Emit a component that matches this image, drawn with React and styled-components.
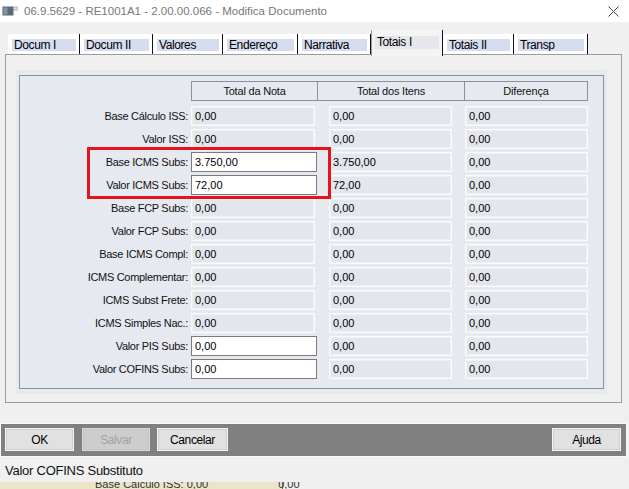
import React from "react";
import styled, { createGlobalStyle } from "styled-components";

const GlobalStyle = createGlobalStyle`
  html, body {
    margin: 0;
    padding: 0;
    background: #f0f0f0;
    overflow: hidden;
  }
  body {
    font-family: "Liberation Sans", Arial, sans-serif;
  }
`;

const Window = styled.div`
  width: 629px;
  height: 489px;
  display: flex;
  flex-direction: column;
  background: #f0f0f0;
  overflow: hidden;
`;

const TitleBar = styled.div`
  height: 22px;
  flex: none;
  display: flex;
  align-items: center;
  background: #ffffff;
  padding-left: 2px;
`;

const Title = styled.span`
  margin-left: 6px;
  font-size: 11.5px;
  color: #777;
  white-space: nowrap;
`;

const CloseBox = styled.div`
  margin-left: auto;
  width: 32px;
  height: 22px;
  display: flex;
  align-items: center;
  justify-content: center;
`;

const TabStrip = styled.div`
  height: 32px;
  flex: none;
  display: flex;
  align-items: flex-end;
  padding-left: 8px;
`;

const Tab = styled.div`
  box-sizing: border-box;
  width: ${(p) => p.$w}px;
  height: ${(p) => (p.$active ? 26 : 20)}px;
  margin-bottom: ${(p) => (p.$active ? -2 : 0)}px;
  position: relative;
  z-index: ${(p) => (p.$active ? 2 : 1)};
  background: ${(p) => (p.$active ? "#f4f4f4" : "#ffffff")};
  border-left: 1px solid ${(p) => (p.$active ? "#9a9a9a" : "#ffffff")};
  border-right: 1px solid #111;
  padding: ${(p) => (p.$active ? "6px 3px 0 3px" : "5px 3px 2px 3px")};
  display: flex;
  align-items: flex-start;
`;

const TabLabel = styled.div`
  flex: 1;
  height: ${(p) => (p.$active ? 13 : 12)}px;
  line-height: ${(p) => (p.$active ? 12 : 13)}px;
  background: ${(p) => (p.$active ? "#e6e7ec" : "#d5ddef")};
  font-size: 12px;
  letter-spacing: -0.4px;
  color: #000;
  padding-left: 2px;
  white-space: nowrap;
  overflow: hidden;
`;

const Panel = styled.div`
  box-sizing: border-box;
  margin-left: 5px;
  width: 617px;
  height: 349px;
  flex: none;
  border: 1px solid #9c9c9c;
  background: #f0f0f0;
  padding: 15px 0 0 10px;
`;

const Group = styled.div`
  box-sizing: border-box;
  width: 591px;
  height: 324px;
  background: #e6e9ef;
  padding: 5px 3px 5px 3px;
`;

const Frame = styled.div`
  box-sizing: border-box;
  position: relative;
  height: 100%;
  border: 1px solid #8c929b;
  padding-top: 5px;
`;

const HeaderRow = styled.div`
  box-sizing: border-box;
  margin-left: 171px;
  width: 397px;
  height: 20px;
  display: flex;
  border: 1px solid #8c929b;
  margin-bottom: 5px;
`;

const HeaderCell = styled.div`
  width: ${(p) => p.$w}px;
  flex: ${(p) => (p.$w ? "none" : 1)};
  border-left: ${(p) => (p.$first ? "none" : "1px solid #8c929b")};
  text-align: center;
  font-size: 11px;
  letter-spacing: -0.2px;
  line-height: 18px;
  color: #111;
`;

const Rows = styled.div`
  display: grid;
  grid-template-columns: 171px 138px 136px 123px;
  grid-auto-rows: 20px;
  row-gap: 3px;
`;

const Label = styled.div`
  text-align: right;
  padding-right: 3px;
  font-size: 11px;
  letter-spacing: -0.3px;
  line-height: 20px;
  color: #111;
  white-space: nowrap;
`;

const Field = styled.div`
  box-sizing: border-box;
  width: ${(p) => p.$w}px;
  height: 20px;
  padding-left: 3px;
  font-size: 11px;
  line-height: 18px;
  color: #000;
  background: ${(p) => (p.$editable ? "#ffffff" : "#e3e6ed")};
  border: 1px solid ${(p) => (p.$editable ? "#7a7a7a" : "#fbfbfc")};
  box-shadow: ${(p) => (p.$editable ? "none" : "inset 0 0 0 1px #eef0f4")};
`;

const Highlight = styled.div`
  box-sizing: border-box;
  position: absolute;
  left: 67px;
  top: 71px;
  width: 244px;
  height: 52px;
  border: 3px solid #e3141b;
  pointer-events: none;
`;

const ButtonBar = styled.div`
  box-sizing: border-box;
  margin-top: 20px;
  width: 627px;
  height: 34px;
  flex: none;
  display: flex;
  align-items: flex-start;
  gap: 8px;
  padding: 4px 5px 0 4px;
  background: #808080;
  border: 1px solid #fafafa;
`;

const Button = styled.button`
  box-sizing: border-box;
  width: ${(p) => p.$w}px;
  height: 23px;
  margin-left: ${(p) => p.$ml || 0}px;
  padding: 0;
  font-family: "Liberation Sans", Arial, sans-serif;
  font-size: 12px;
  letter-spacing: -0.4px;
  color: ${(p) => (p.disabled ? "#a2a2a2" : "#000")};
  background: ${(p) => (p.disabled ? "#cdcdcd" : "#e1e1e1")};
  border: 1px solid ${(p) => (p.disabled ? "#dadada" : "#f4f4f4")};
  box-shadow: inset 0 0 0 1px ${(p) => (p.disabled ? "#c4c4c4" : "#cfcfcf")};

  &.push {
    margin-left: auto;
  }
`;

const StatusBar = styled.div`
  height: 25px;
  flex: none;
  display: flex;
  align-items: center;
  padding: 2px 0 0 5px;
  box-sizing: border-box;
  font-size: 13px;
  letter-spacing: -0.25px;
  color: #111;
  background: #f0f0f0;
`;

const BehindStrip = styled.div`
  flex: 1;
  display: flex;
  overflow: hidden;
  background: #f0f0f0;
`;

const BehindForm = styled.div`
  width: 283px;
  background: #ece4c8;
  border-right: 1px solid #6b6b6b;
  display: flex;
  align-items: flex-start;
  padding-left: 95px;
  box-sizing: border-box;
  font-size: 11px;
  color: #333;
  line-height: 12px;
  gap: 70px;
`;

const BehindText = styled.span`
  margin-top: -4px;
  white-space: nowrap;
`;

function AppIcon() {
  return (
    <svg width="16" height="12" viewBox="0 0 16 12">
      <rect x="0.5" y="1.5" width="11" height="9" fill="#5d6876" />
      <rect x="1.5" y="2.5" width="4" height="7" fill="#8592a1" />
      <rect x="11.5" y="1.5" width="4" height="4" fill="#a5b0bc" />
      <rect x="12.5" y="2.5" width="2" height="2" fill="#e9edf1" />
    </svg>
  );
}

function CloseIcon() {
  return (
    <svg width="11" height="11" viewBox="0 0 11 11">
      <path d="M0.5 0.5 L10.5 10.5 M10.5 0.5 L0.5 10.5" stroke="#444" strokeWidth="1" />
    </svg>
  );
}

const tabs = [
  { name: "Docum I", w: 72 },
  { name: "Docum II", w: 73 },
  { name: "Valores", w: 70 },
  { name: "Endereço", w: 75 },
  { name: "Narrativa", w: 73 },
  { name: "Totais I", w: 72, active: true },
  { name: "Totais II", w: 71 },
  { name: "Transp", w: 74 },
];

const rows = [
  { label: "Base Cálculo ISS:", a: "0,00", b: "0,00", c: "0,00" },
  { label: "Valor ISS:", a: "0,00", b: "0,00", c: "0,00" },
  { label: "Base ICMS Subs:", a: "3.750,00", b: "3.750,00", c: "0,00", edit: true },
  { label: "Valor ICMS Subs:", a: "72,00", b: "72,00", c: "0,00", edit: true },
  { label: "Base FCP Subs:", a: "0,00", b: "0,00", c: "0,00" },
  { label: "Valor FCP Subs:", a: "0,00", b: "0,00", c: "0,00" },
  { label: "Base ICMS Compl:", a: "0,00", b: "0,00", c: "0,00" },
  { label: "ICMS Complementar:", a: "0,00", b: "0,00", c: "0,00" },
  { label: "ICMS Subst Frete:", a: "0,00", b: "0,00", c: "0,00" },
  { label: "ICMS Simples Nac.:", a: "0,00", b: "0,00", c: "0,00" },
  { label: "Valor PIS Subs:", a: "0,00", b: "0,00", c: "0,00", edit: true },
  { label: "Valor COFINS Subs:", a: "0,00", b: "0,00", c: "0,00", edit: true },
];

export default function App() {
  return (
    <>
      <GlobalStyle />
      <Window>
        <TitleBar>
          <AppIcon />
          <Title>06.9.5629 - RE1001A1 - 2.00.00.066 - Modifica Documento</Title>
          <CloseBox>
            <CloseIcon />
          </CloseBox>
        </TitleBar>

        <TabStrip>
          {tabs.map((t) => (
            <Tab key={t.name} $w={t.w} $active={t.active}>
              <TabLabel $active={t.active}>{t.name}</TabLabel>
            </Tab>
          ))}
        </TabStrip>

        <Panel>
          <Group>
            <Frame>
              <HeaderRow>
                <HeaderCell $w={125} $first>Total da Nota</HeaderCell>
                <HeaderCell $w={146}>Total dos Itens</HeaderCell>
                <HeaderCell>Diferença</HeaderCell>
              </HeaderRow>
              <Rows>
                {rows.map((r) => (
                  <React.Fragment key={r.label}>
                    <Label>{r.label}</Label>
                    <Field $w={r.edit ? 126 : 124} $editable={r.edit}>{r.a}</Field>
                    <Field $w={123}>{r.b}</Field>
                    <Field $w={123}>{r.c}</Field>
                  </React.Fragment>
                ))}
              </Rows>
              <Highlight />
            </Frame>
          </Group>
        </Panel>

        <ButtonBar>
          <Button $w={69}>OK</Button>
          <Button $w={68} disabled>Salvar</Button>
          <Button $w={71} $ml={-1}>Cancelar</Button>
          <Button $w={69} className="push">Ajuda</Button>
        </ButtonBar>

        <StatusBar>Valor COFINS Substituto</StatusBar>

        <BehindStrip>
          <BehindForm>
            <BehindText>Base Cálculo ISS: 0,00</BehindText>
            <BehindText>0,00</BehindText>
          </BehindForm>
        </BehindStrip>
      </Window>
    </>
  );
}
